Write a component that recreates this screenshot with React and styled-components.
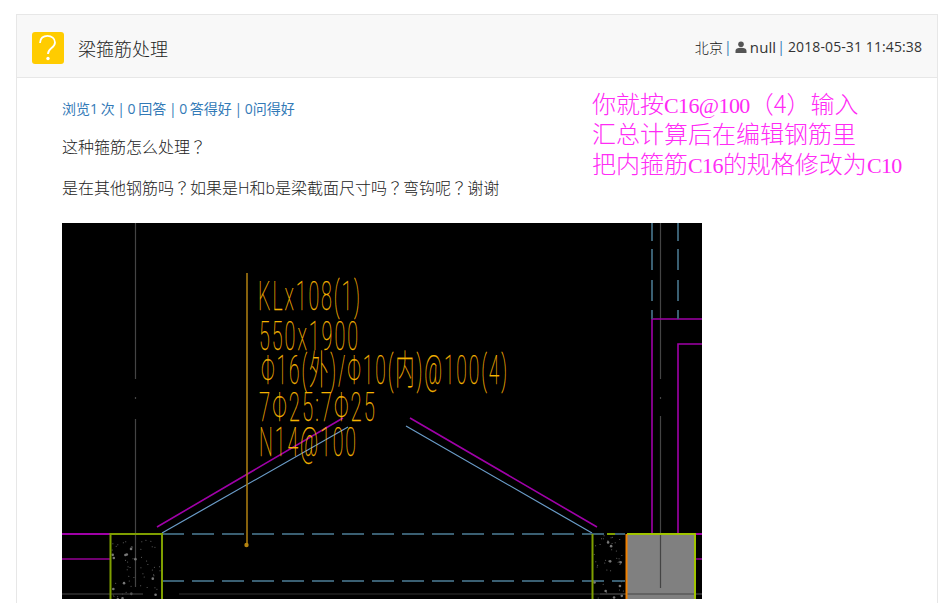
import styled, { createGlobalStyle } from "styled-components";

const GlobalStyle = createGlobalStyle`
  html, body {
    margin: 0;
    padding: 0;
    height: 603px;
    overflow: hidden;
    background: #fff;
  }
  body {
    font-family: "Open Sans", "Noto Sans CJK SC", sans-serif;
    font-size: 14px;
    color: #333;
  }
`;

const Page = styled.div`
  padding: 14px 8px 0 16px;
  height: 603px;
  box-sizing: border-box;
  overflow: hidden;
`;

const Panel = styled.section`
  position: relative;
  height: 600px;
  box-sizing: border-box;
  border: 1px solid #e7e7e7;
  border-bottom: none;
`;

const Header = styled.header`
  display: flex;
  align-items: center;
  justify-content: space-between;
  height: 62px;
  padding: 0 15px;
  background: #f8f8f8;
  border-bottom: 1px solid #e7e7e7;
`;

const TitleWrap = styled.div`
  display: flex;
  align-items: center;
  gap: 14px;
  margin-top: 3px;
`;

const QuestionBadge = styled.div`
  display: flex;
  align-items: center;
  justify-content: center;
  width: 32px;
  height: 32px;
  border-radius: 3px;
  background: #fc0;
`;

const Title = styled.h1`
  margin: 0;
  font-size: 18px;
  font-weight: 300;
  color: #222;
`;

const Meta = styled.div`
  display: flex;
  align-items: center;
  gap: 3px;
  margin-top: 1px;
  font-size: 14px;
  letter-spacing: 0.1px;
  color: #333;
`;

const City = styled.span`
  font-weight: 300;
  color: #111;
`;

const Sep = styled.span`
  margin: 0 0 0 -2px;
  color: #337ab7;

  &:last-of-type {
    margin-right: 1px;
  }
`;

const UserName = styled.span`
  font-size: 15px;
`;

const Body = styled.div`
  padding: 21px 0 0 45px;
`;

const Stats = styled.div`
  height: 20px;
  line-height: 20px;
  color: #337ab7;
  font-size: 14px;
  word-spacing: -1px;
`;

const Para = styled.p`
  margin: 18px 0 0;
  height: 20px;
  line-height: 20px;
  font-size: 16px;
  font-weight: 300;
  color: #222;

  & + & {
    margin-top: 21px;
  }
`;

// full-width question mark sits centred in its cell, as in the TC face
const Ask = styled.span`
  font-family: "Noto Sans CJK TC", sans-serif;
  line-height: 0;
`;

const Drawing = styled.div`
  width: 640px;
  height: 376px;
  margin-top: 25px;
  background: #000;

  svg {
    display: block;
  }
`;

const Note = styled.div`
  position: absolute;
  left: 575px;
  top: 73px;
  font-family: "Noto Sans CJK SC", sans-serif;
  font-size: 24px;
  font-weight: 300;
  color: #ff2bf5;
  white-space: nowrap;
`;

const NoteLine = styled.div`
  height: 30px;
  line-height: 30px;
`;

const NoteLatin = styled.span`
  font-family: "Liberation Serif", serif;
  font-size: 22px;
  line-height: 0;
  letter-spacing: -0.6px;
`;

const CadLabel = styled.text`
  font-family: "Roboto", "Noto Sans CJK SC", sans-serif;
  font-weight: 100;
  letter-spacing: 4px;
  fill: #f5b400;
  stroke: #f5b400;
  stroke-width: 0.25px;
`;

// column hatch, fixed seed so it draws the same every time
function speckles(x, w, h, count, seed) {
  const out = [];
  let s = seed;
  const next = () => {
    s = (s * 9301 + 49297) % 233280;
    return s / 233280;
  };
  for (let i = 0; i < count; i++) {
    out.push({ x: x + next() * w, y: 312 + next() * h, r: next() < 0.2 ? 1.3 : 0.5 });
  }
  return out;
}

const cadLabels = [
  { text: "KLx108(1)", x: 196, y: 87, w: 104, size: 41 },
  { text: "550x1900", x: 197, y: 127, w: 101, size: 40 },
  { text: "Φ16(外)/Φ10(内)@100(4)", x: 199, y: 161, w: 248, size: 40 },
  { text: "7Φ25:7Φ25", x: 197, y: 198, w: 118, size: 40 },
  { text: "N14@100", x: 197, y: 233, w: 99, size: 40 },
];

function CadDrawing() {
  const specks = [
    ...speckles(50, 49, 65, 60, 17),
    ...speckles(532, 31, 65, 45, 53),
  ];

  return (
    <svg width="640" height="376" viewBox="0 0 640 376">
      {/* axis lines */}
      <g stroke="#444" strokeWidth="1.2">
        <path d="M73.5 0V156M73.5 174V176M73.5 196V364" />
        <path d="M598.5 0V156M598.5 174V176M598.5 193V365" />
      </g>
      <path d="M0 371H81M117 371H640" stroke="#333" strokeWidth="1" />

      {/* stirrups */}
      <g fill="none" stroke="#a000a8" strokeWidth="1.6">
        <path d="M0 311H48M633 311H640" strokeWidth="2" />
        <path d="M590 311V96H640M616 311V121H640" />
        <path d="M95 304L281 195M348 195L535 304" />
      </g>
      <path d="M0 336H48M633 336H640" stroke="#e000e0" strokeWidth="1" />
      <path d="M100 310L286 204M344 203L530 310" stroke="#6a9cc8" strokeWidth="1.2" fill="none" />

      {/* dashed rebar */}
      <g stroke="#3a5f72" strokeWidth="2" strokeDasharray="22 8" fill="none">
        <path d="M100 311H563" />
        <path d="M100 358H563" />
        <path d="M590 0V96M616 0V96" strokeDasharray="18 8 21 10 21 9" />
      </g>

      {/* columns */}
      <rect x="564" y="311" width="69" height="70" fill="#808080" />
      {specks.map((p, i) => (
        <circle key={i} cx={p.x} cy={p.y} r={p.r} fill="#777" />
      ))}
      <path d="M598.5 311V365" stroke="#444" strokeWidth="1.2" />
      <path d="M0 371H81" stroke="#333" strokeWidth="1" />
      <path d="M538 371H640" stroke="#444" strokeWidth="1" />
      <path d="M48.5 376V311H100V376" fill="none" stroke="#7f9f00" strokeWidth="2" />
      <path d="M530.5 376V311M545 311H553" fill="none" stroke="#7f9f00" strokeWidth="2" />
      <path d="M565 311H633V376" fill="none" stroke="#a0c400" strokeWidth="2" />
      <path d="M564.5 311V376" stroke="#f08000" strokeWidth="2" />

      {/* leader */}
      <path d="M185 50V322" stroke="#a87a10" strokeWidth="1.6" />
      <circle cx="184.5" cy="322" r="2.2" fill="#b58410" />

      {cadLabels.map((l) => (
        <CadLabel
          key={l.text}
          x={l.x}
          y={l.y}
          fontSize={l.size}
          textLength={l.w}
          lengthAdjust="spacingAndGlyphs"
        >
          {l.text}
        </CadLabel>
      ))}
    </svg>
  );
}

export default function App() {
  return (
    <>
      <GlobalStyle />
      <Page>
        <Panel>
          <Header>
            <TitleWrap>
              <QuestionBadge>
                <svg width="32" height="32" viewBox="0 0 32 32" fill="none">
                  <path
                    d="M8 11C8 6 11.500 3.800 15.500 3.800s7.500 2.500 7.500 6.700c0 3.100-1.900 4.400-4 6-1.900 1.500-3 2.800-3 5.500"
                    stroke="#fff"
                    strokeWidth="1.800"
                  />
                  <circle cx="16" cy="26.500" r="1.700" fill="#fff" />
                </svg>
              </QuestionBadge>
              <Title>梁箍筋处理</Title>
            </TitleWrap>
            <Meta>
              <City>北京</City>
              <Sep>|</Sep>
              <svg width="12" height="12" viewBox="0 0 12 12" fill="#555">
                <circle cx="6" cy="3.300" r="2.800" />
                <path d="M0.500 12V9.800C0.500 7.800 2.500 6.700 6 6.700s5.500 1.100 5.500 3.100V12z" />
              </svg>
              <UserName>null</UserName>
              <Sep>|</Sep>
              <span>2018-05-31 11:45:38</span>
            </Meta>
          </Header>
          <Body>
            <Stats>浏览1 次 | 0 回答 | 0 答得好 | 0问得好</Stats>
            <Para>
              这种箍筋怎么处理<Ask>？</Ask>
            </Para>
            <Para>
              是在其他钢筋吗<Ask>？</Ask>如果是H和b是梁截面尺寸吗<Ask>？</Ask>弯钩呢<Ask>？</Ask>谢谢
            </Para>
            <Drawing>
              <CadDrawing />
            </Drawing>
          </Body>
          <Note>
            <NoteLine>
              你就按<NoteLatin>C16@100</NoteLatin>（4）输入
            </NoteLine>
            <NoteLine>汇总计算后在编辑钢筋里</NoteLine>
            <NoteLine>
              把内箍筋<NoteLatin>C16</NoteLatin>的规格修改为<NoteLatin>C10</NoteLatin>
            </NoteLine>
          </Note>
        </Panel>
      </Page>
    </>
  );
}
